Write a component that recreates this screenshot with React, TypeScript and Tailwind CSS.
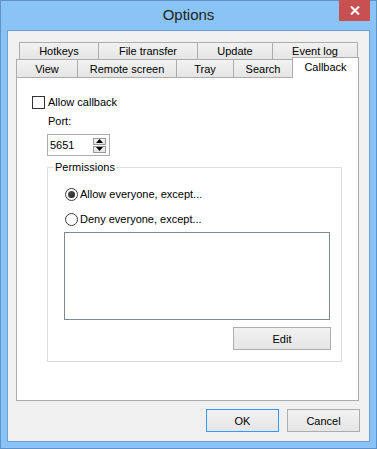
const tabBg = 'bg-gradient-to-b from-[#f2f2f2] to-[#e5e5e5]';

const TopTab = ({ label, w, last }: { label: string; w: string; last?: boolean }) => (
  <div
    className={`${w} h-[17px] border-t border-l ${last ? 'border-r' : ''} border-[#acacac] ${tabBg} flex items-center justify-center`}
  >
    {label}
  </div>
);

const BottomTab = ({ label, w }: { label: string; w: string }) => (
  <div
    className={`${w} h-[18px] border-t border-l border-[#acacac] ${tabBg} flex items-center justify-center`}
  >
    {label}
  </div>
);

const Button = ({ label, w, isDefault }: { label: string; w: string; isDefault?: boolean }) => (
  <div
    className={`${w} h-[23px] border ${isDefault ? 'border-[#3399ff]' : 'border-[#adadad]'} ${tabBg} flex items-center justify-center`}
  >
    {label}
  </div>
);

const Radio = ({ checked, label }: { checked?: boolean; label: string }) => (
  <div className="flex items-center h-[14px] gap-[2px]">
    <div className="w-[13px] h-[13px] rounded-full border border-[#3c3c3c] bg-white flex items-center justify-center">
      {checked && <div className="w-[7px] h-[7px] rounded-full bg-gradient-to-br from-[#555] to-[#222]" />}
    </div>
    <span>{label}</span>
  </div>
);

const SpinArrow = ({ up }: { up?: boolean }) => (
  <div className={`w-[13px] h-[7px] border border-[#9a9a9a] ${tabBg} flex items-center justify-center`}>
    <svg width="7" height="4" viewBox="0 0 7 4">
      {up ? <polygon points="0,4 7,4 3.5,0" fill="#000" /> : <polygon points="0,0 7,0 3.5,4" fill="#000" />}
    </svg>
  </div>
);

export default function App() {
  return (
    <div className="relative w-[377px] h-[449px] border border-[#5f93c7] bg-[#8ac4f6] flex flex-col px-[6px] font-['Liberation_Sans',sans-serif] text-[11px] text-black leading-[14px]">
      <div className="h-[29px] flex items-center justify-center text-[15px] text-[#222] pb-[1px]">Options</div>
      <div className="absolute top-[-1px] right-[6px] w-[31px] h-[21px] bg-[#c75050] flex items-center justify-center">
        <svg width="10" height="9" viewBox="0 0 10 9">
          <path d="M1 0.5 L9 8.5 M9 0.5 L1 8.5" stroke="#fff" strokeWidth="2" />
        </svg>
      </div>

      <div className="h-[412px] border border-[#6d9fd2] bg-[#f0f0f0] flex flex-col">
        {/* tabs */}
        <div className="h-[46px] flex flex-col pt-[11px]">
          <div className="flex ml-[11px]">
            <TopTab label="Hotkeys" w="w-[79px]" />
            <TopTab label="File transfer" w="w-[99px]" />
            <TopTab label="Update" w="w-[75px]" />
            <TopTab label="Event log" w="w-[86px]" last />
          </div>
          <div className="flex ml-[8px] h-[18px] items-end">
            <BottomTab label="View" w="w-[61px]" />
            <BottomTab label="Remote screen" w="w-[99px]" />
            <BottomTab label="Tray" w="w-[57px]" />
            <BottomTab label="Search" w="w-[59px]" />
            <div className="relative z-10 w-[67px] h-[21px] -mb-[1px] border-t border-l border-r border-[#acacac] bg-white flex items-start justify-center pt-[2px]">
              Callback
            </div>
          </div>
        </div>

        {/* panel */}
        <div className="ml-[8px] w-[343px] h-[324px] border border-[#acacac] bg-white flex flex-col">
          <div className="flex items-center gap-[3px] ml-[15px] mt-[17px]">
            <div className="w-[13px] h-[13px] border border-[#333] bg-white" />
            <span>Allow callback</span>
          </div>
          <div className="ml-[31px] mt-[5px]">Port:</div>
          <div className="ml-[30px] mt-[6px] w-[63px] h-[22px] border border-[#abadb3] bg-white flex items-center justify-between pl-[2px] pr-[3px]">
            <span>5651</span>
            <div className="flex flex-col gap-px">
              <SpinArrow up />
              <SpinArrow />
            </div>
          </div>

          <fieldset className="ml-[30px] mt-[4px] w-[295px] h-[202px] border border-[#dcdcdc] flex flex-col">
            <legend className="ml-[6px] px-[1px] leading-[14px]">Permissions</legend>
            <div className="ml-[17px] mt-[13px]">
              <Radio checked label="Allow everyone, except..." />
            </div>
            <div className="ml-[17px] mt-[11px]">
              <Radio label="Deny everyone, except..." />
            </div>
            <div className="ml-[16px] mt-[6px] w-[266px] h-[88px] border border-[#828790] bg-white" />
            <div className="ml-[185px] mt-[7px]">
              <Button label="Edit" w="w-[98px]" />
            </div>
          </fieldset>
        </div>

        <div className="flex justify-end gap-[8px] pr-[9px] mt-[8px]">
          <Button label="OK" w="w-[73px]" isDefault />
          <Button label="Cancel" w="w-[73px]" />
        </div>
      </div>
    </div>
  );
}
